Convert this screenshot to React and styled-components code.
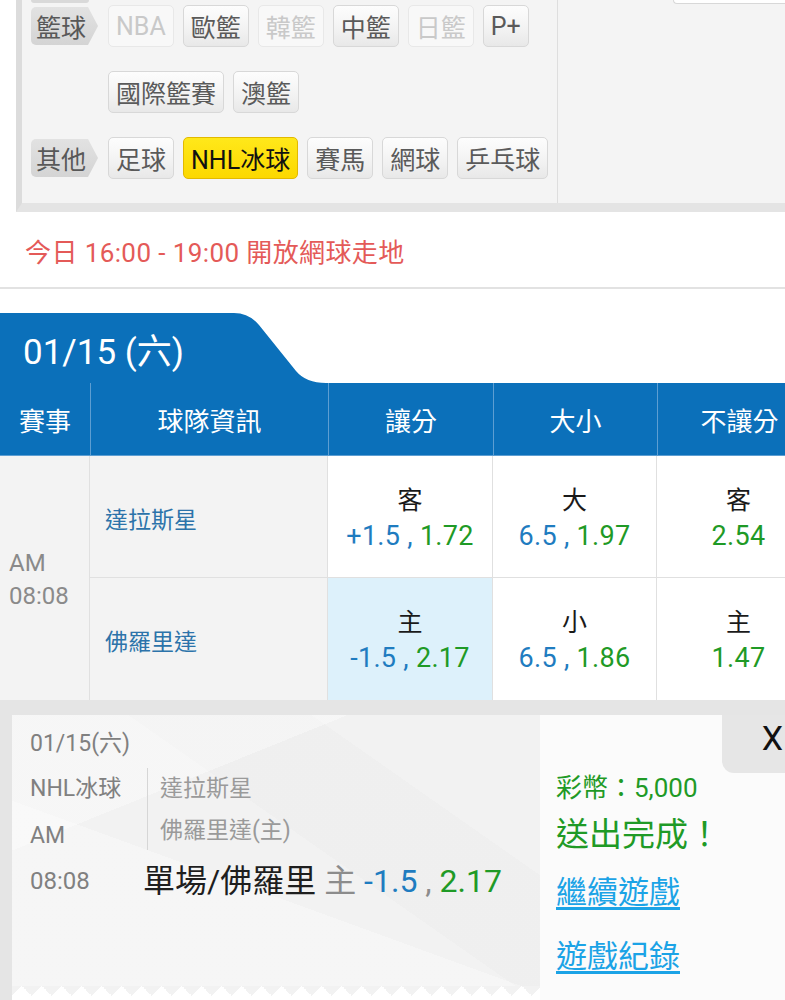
import React from "react";
import styled, { createGlobalStyle, css } from "styled-components";

const FONT = `Roboto, "Noto Sans CJK TC", "Noto Sans", sans-serif`;
const BLUE = "#0b70ba";
const NUM_BLUE = "#1f7cc0";
const GREEN = "#1f9a26";

const groups = [
  {
    label: "籃球",
    items: [
      { name: "NBA", state: "off" },
      { name: "歐籃" },
      { name: "韓籃", state: "off" },
      { name: "中籃" },
      { name: "日籃", state: "off" },
      { name: "P+" },
      { name: "國際籃賽" },
      { name: "澳籃" },
    ],
  },
  {
    label: "其他",
    items: [
      { name: "足球" },
      { name: "NHL冰球", state: "on" },
      { name: "賽馬" },
      { name: "網球" },
      { name: "乒乓球" },
    ],
  },
];

const rows = [
  {
    team: "達拉斯星",
    cells: [
      { side: "客", line: "+1.5", odds: "1.72" },
      { side: "大", line: "6.5", odds: "1.97" },
      { side: "客", odds: "2.54" },
    ],
  },
  {
    team: "佛羅里達",
    cells: [
      { side: "主", line: "-1.5", odds: "2.17", picked: true },
      { side: "小", line: "6.5", odds: "1.86" },
      { side: "主", odds: "1.47" },
    ],
  },
];

function App() {
  return (
    <Page>
      <GlobalStyle />
      <Panel>
        <PanelLeft>
          <PrevTab />
          <Groups>
            {groups.map((g) => (
              <Group key={g.label}>
                <GroupLabel>{g.label}</GroupLabel>
                <ButtonWrap>
                  {g.items.map((it) => (
                    <SportButton key={it.name} $state={it.state}>
                      {it.name}
                    </SportButton>
                  ))}
                </ButtonWrap>
              </Group>
            ))}
          </Groups>
        </PanelLeft>
        <PanelRight>
          <PrevBox />
        </PanelRight>
      </Panel>

      <Notice>今日 16:00 - 19:00 開放網球走地</Notice>

      <Board>
        <DateTab>01/15 (六)</DateTab>
        <HeadRow>
          <HeadCell>賽事</HeadCell>
          <HeadCell>球隊資訊</HeadCell>
          <HeadCell>讓分</HeadCell>
          <HeadCell>大小</HeadCell>
          <HeadCell>不讓分</HeadCell>
        </HeadRow>
        <BodyGrid>
          <TimeCell>
            AM
            <br />
            08:08
          </TimeCell>
          {rows.map((r) => (
            <React.Fragment key={r.team}>
              <TeamCell>{r.team}</TeamCell>
              {r.cells.map((c, i) => (
                <OddsCell key={i} $picked={c.picked}>
                  <Side>{c.side}</Side>
                  <Nums>
                    {c.line && (
                      <>
                        <LineNum>{c.line}</LineNum>
                        <Comma> , </Comma>
                      </>
                    )}
                    <OddsNum>{c.odds}</OddsNum>
                  </Nums>
                </OddsCell>
              ))}
            </React.Fragment>
          ))}
        </BodyGrid>
      </Board>

      <Bottom>
        <Ticket>
          <TicketBody>
            <Muted>01/15(六)</Muted>
            <MatchGrid>
              <LeftCol>
                <Muted>NHL冰球</Muted>
                <Muted>AM</Muted>
              </LeftCol>
              <Teams>
                <TeamName>達拉斯星</TeamName>
                <TeamName>佛羅里達(主)</TeamName>
              </Teams>
            </MatchGrid>
            <BetRow>
              <TimeLabel>08:08</TimeLabel>
              <BetText>
                單場/佛羅里 <Grey>主</Grey> <LineNum>-1.5</LineNum>
                <Grey> , </Grey>
                <OddsNum>2.17</OddsNum>
              </BetText>
            </BetRow>
          </TicketBody>
          <ZigZag />
        </Ticket>
        <Result>
          <CloseTab>X</CloseTab>
          <Coins>彩幣：5,000</Coins>
          <Done>送出完成！</Done>
          <Link href="#">繼續遊戲</Link>
          <Link href="#">遊戲紀錄</Link>
        </Result>
      </Bottom>
    </Page>
  );
}

export default App;

const GlobalStyle = createGlobalStyle`
  html, body {
    margin: 0;
    padding: 0;
    background: #fff;
    overflow-x: hidden;
  }
  body {
    font-family: ${FONT};
  }
`;

const Page = styled.div`
  width: 785px;
  height: 1000px;
  overflow: hidden;
  font-family: ${FONT};
  background: #fff;
`;

/* ---------- sport picker panel ---------- */

const Panel = styled.div`
  margin-left: 16px;
  display: flex;
  height: 203px;
  background: #f4f4f4;
  border-left: 6px solid #dcdcdc;
  border-bottom: 9px solid #e4e4e4;
`;

const PanelLeft = styled.div`
  width: 535px;
  padding-left: 9px;
  box-sizing: border-box;
`;

const PrevTab = styled.div`
  width: 58px;
  height: 3px;
  background: #d9d9d9;
  border-radius: 0 0 4px 4px;
`;

const Groups = styled.div`
  margin-top: 2px;
  display: flex;
  flex-direction: column;
  gap: 24px;
`;

const Group = styled.div`
  display: flex;
  align-items: flex-start;
  gap: 10px;
`;

const GroupLabel = styled.div`
  width: 67px;
  height: 38px;
  margin-top: 2px;
  box-sizing: border-box;
  padding-left: 5px;
  display: flex;
  align-items: center;
  font-size: 25px;
  color: #585858;
  background: linear-gradient(#e2e2e2, #d4d4d4);
  border-radius: 5px 0 0 5px;
  clip-path: polygon(0 0, 57px 0, 100% 50%, 57px 100%, 0 100%);
  flex-shrink: 0;
`;

const ButtonWrap = styled.div`
  flex: 1;
  display: flex;
  flex-wrap: wrap;
  column-gap: 9px;
  row-gap: 24px;
`;

const SportButton = styled.div`
  height: 42px;
  box-sizing: border-box;
  padding: 0 7px;
  display: flex;
  align-items: center;
  font-size: 25px;
  border-radius: 5px;
  color: #5a5a5a;
  border: 1px solid #d8d8d8;
  background: linear-gradient(#fdfdfd 0%, #f3f3f3 55%, #e8e8e8 100%);

  ${(p) =>
    p.$state === "off" &&
    css`
      color: #c9c9c9;
      border-color: #e8e8e8;
      background: #f8f8f8;
    `}

  ${(p) =>
    p.$state === "on" &&
    css`
      color: #111;
      border-color: #e2b900;
      background: linear-gradient(#ffe81a, #fcd800);
    `}
`;

const PanelRight = styled.div`
  flex: 1;
  border-left: 1px solid #dedede;
`;

const PrevBox = styled.div`
  margin-left: 115px;
  height: 3px;
  background: #fff;
  border: 1px solid #d8d8d8;
  border-top: none;
  border-right: none;
  border-radius: 0 0 0 6px;
`;

/* ---------- notice ---------- */

const Notice = styled.div`
  padding: 23px 25px 16px;
  font-size: 26px;
  line-height: 36px;
  letter-spacing: 0.4px;
  color: #e45a58;
  border-bottom: 2px solid #e2e2e2;
`;

/* ---------- odds board ---------- */

const Board = styled.div`
  margin-top: 24px;
  width: 821px;
`;

const DateTab = styled.div`
  width: 326px;
  height: 70px;
  box-sizing: border-box;
  padding-left: 23px;
  display: flex;
  align-items: center;
  font-size: 35px;
  color: #fff;
  background: ${BLUE};
  clip-path: path("M0 0 H234 Q249 0 259 12 L296 58 Q306 70 326 70 H0 Z");
`;

const columns = "90px 238px 165px 164px 164px";

const HeadRow = styled.div`
  display: grid;
  grid-template-columns: ${columns};
  height: 72px;
  background: ${BLUE};
  border-bottom: 1px solid #5d9ed2;
`;

const HeadCell = styled.div`
  display: flex;
  align-items: center;
  justify-content: center;
  font-size: 26px;
  color: #fff;
  & + & {
    border-left: 1px solid #5d9ed2;
  }
`;

const BodyGrid = styled.div`
  display: grid;
  grid-template-columns: ${columns};
  grid-template-rows: 122px 122px;
  background: #fff;
`;

const TimeCell = styled.div`
  grid-row: 1 / span 2;
  display: flex;
  align-items: center;
  padding-left: 9px;
  padding-top: 3px;
  font-size: 24px;
  line-height: 33px;
  color: #8a8a8a;
  background: #f3f3f3;
  border-right: 1px solid #e0e0e0;
`;

const TeamCell = styled.div`
  display: flex;
  align-items: center;
  padding-left: 15px;
  padding-top: 2px;
  font-size: 23px;
  color: #2c73aa;
  background: #f3f3f3;
  border-right: 1px solid #e0e0e0;
  &:nth-child(2) {
    border-bottom: 1px solid #e0e0e0;
  }
`;

const OddsCell = styled.div`
  display: flex;
  flex-direction: column;
  align-items: center;
  justify-content: center;
  padding-top: 4px;
  background: ${(p) => (p.$picked ? "#ddf1fb" : "#fff")};
  border-right: 1px solid #e0e0e0;
  &:nth-child(-n + 5) {
    border-bottom: 1px solid #e0e0e0;
  }
`;

const Side = styled.div`
  font-size: 25px;
  line-height: 34px;
  color: #1a1a1a;
`;

const Nums = styled.div`
  font-size: 27px;
  line-height: 36px;
  letter-spacing: 0.3px;
  white-space: pre;
`;

const LineNum = styled.span`
  color: ${NUM_BLUE};
`;

const OddsNum = styled.span`
  color: ${GREEN};
`;

const Comma = styled.span`
  color: ${NUM_BLUE};
`;

/* ---------- bottom ticket ---------- */

const Bottom = styled.div`
  display: flex;
  height: 300px;
  padding: 15px 0 0 12px;
  background: #e5e5e5;
`;

const Ticket = styled.div`
  width: 528px;
  height: 285px;
  display: flex;
  flex-direction: column;
  background: #fff;
`;

const TicketBody = styled.div`
  flex: 1;
  padding: 12px 0 0 18px;
  background:
    linear-gradient(158deg, rgba(255, 255, 255, 0.35) 0 28%, transparent 28%),
    linear-gradient(35deg, transparent 0 55%, rgba(0, 0, 0, 0.012) 55% 75%, transparent 75%),
    linear-gradient(200deg, transparent 0 60%, rgba(255, 255, 255, 0.3) 60%),
    #f2f2f2;
`;

const ZigZag = styled.div`
  height: 10px;
  margin-bottom: 4px;
  background-color: #fff;
  background-image: linear-gradient(135deg, #f2f2f2 25%, transparent 25%),
    linear-gradient(225deg, #f2f2f2 25%, transparent 25%);
  background-size: 20px 20px;
  background-repeat: repeat-x;
`;

const Muted = styled.div`
  font-size: 23px;
  line-height: 33px;
  color: #808080;
`;

const MatchGrid = styled.div`
  display: flex;
  margin-top: 12px;
`;

const LeftCol = styled.div`
  width: 117px;
  display: flex;
  flex-direction: column;
  gap: 14px;
`;

const Teams = styled.div`
  border-left: 1px solid #d6d6d6;
  padding-left: 12px;
  display: flex;
  flex-direction: column;
  gap: 9px;
  height: 82px;
  margin-top: -4px;
  padding-top: 4px;
  box-sizing: border-box;
`;

const TeamName = styled.div`
  font-size: 23px;
  line-height: 33px;
  color: #9a9a9a;
`;

const BetRow = styled.div`
  display: flex;
  align-items: center;
  margin-top: 9px;
`;

const TimeLabel = styled(Muted)`
  width: 113px;
  font-size: 24px;
`;

const BetText = styled.div`
  font-size: 32px;
  line-height: 40px;
  color: #1e1e1e;
  white-space: pre;
`;

const Grey = styled.span`
  color: #8c8c8c;
`;

const Result = styled.div`
  position: relative;
  flex: 1;
  height: 285px;
  padding: 56px 0 0 16px;
  box-sizing: border-box;
  background: #fbfbfb;
  display: flex;
  flex-direction: column;
  align-items: flex-start;
`;

const CloseTab = styled.div`
  position: absolute;
  top: 0;
  right: 0;
  width: 63px;
  height: 58px;
  box-sizing: border-box;
  padding-right: 2px;
  display: flex;
  justify-content: flex-end;
  align-items: flex-start;
  padding-top: 3px;
  font-size: 34px;
  color: #111;
  background: #e6e6e6;
  border-radius: 0 0 0 12px;
`;

const Coins = styled.div`
  font-size: 26px;
  line-height: 34px;
  color: ${GREEN};
`;

const Done = styled.div`
  margin-top: 9px;
  font-size: 33px;
  line-height: 42px;
  color: ${GREEN};
`;

const Link = styled.a`
  margin-top: 17px;
  font-size: 31px;
  line-height: 40px;
  color: #1ba3e6;
  text-decoration: underline;
  text-underline-offset: 4px;
  & + & {
    margin-top: 24px;
  }
`;
